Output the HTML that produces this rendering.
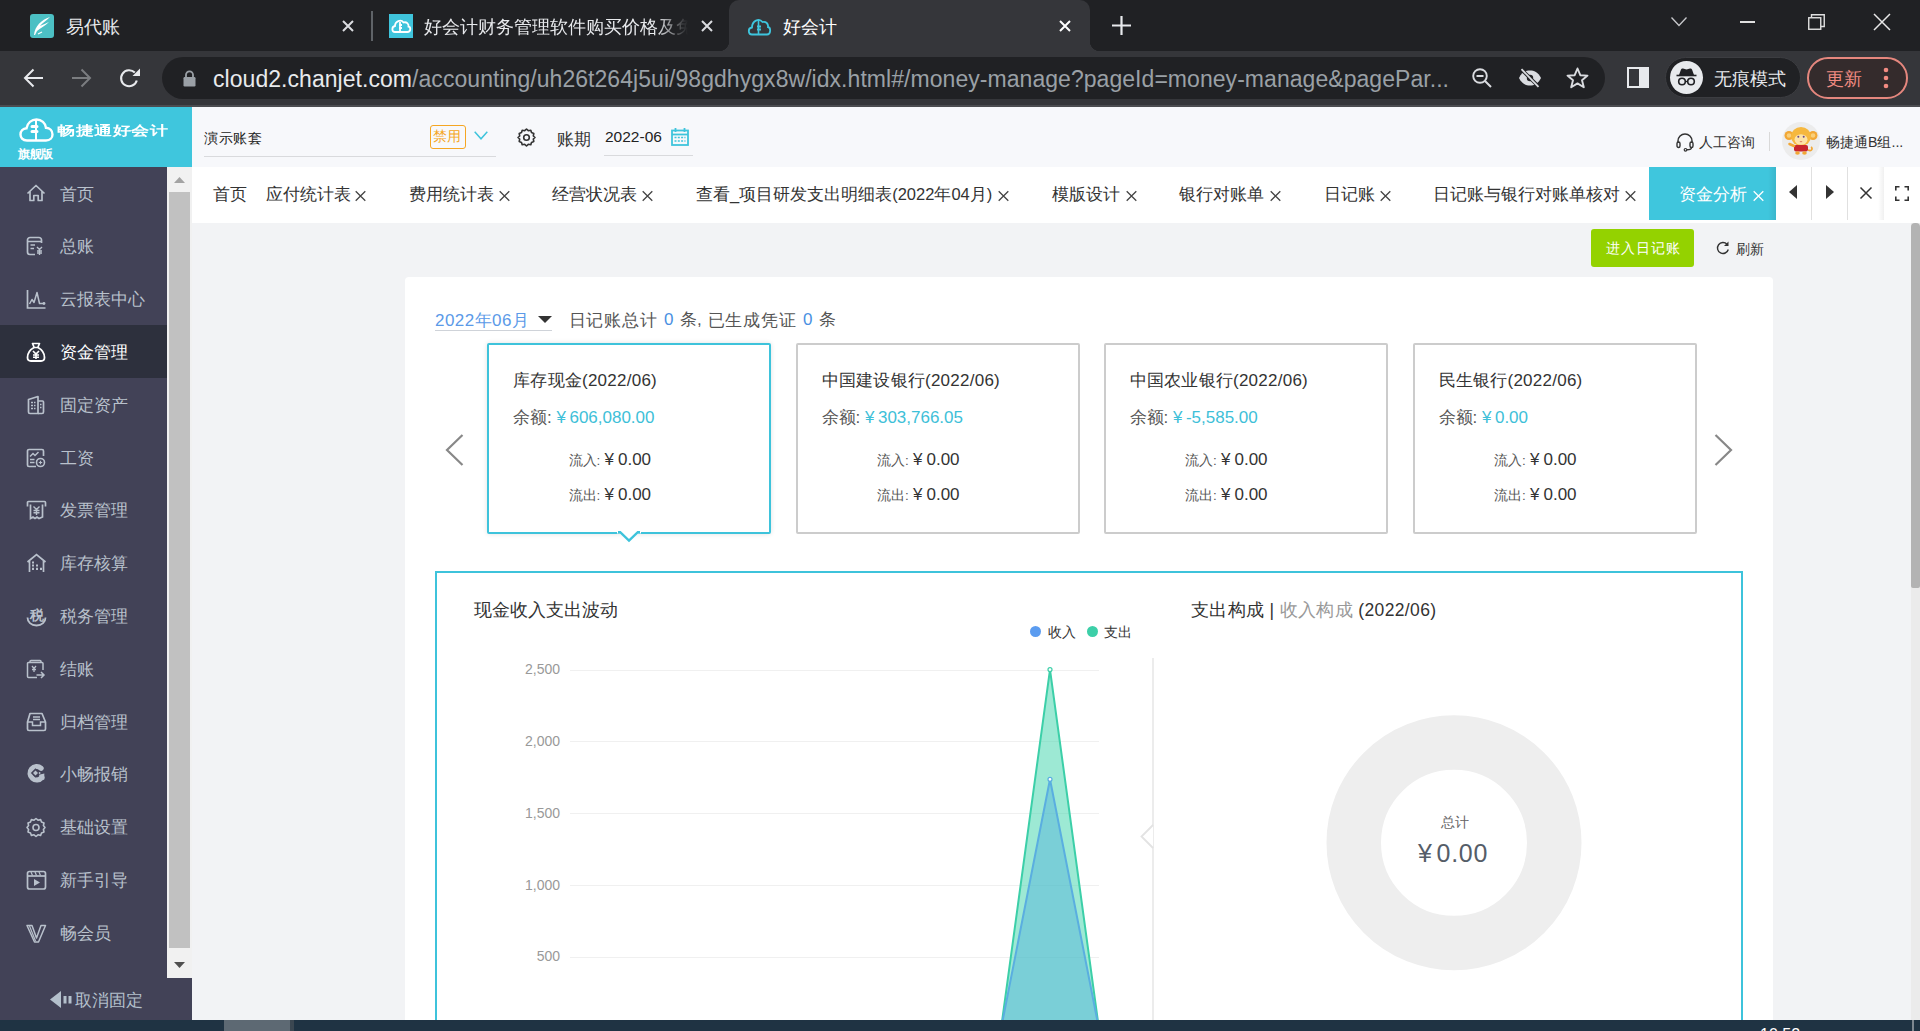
<!DOCTYPE html>
<html><head><meta charset="utf-8">
<style>
*{box-sizing:border-box;margin:0;padding:0}
html,body{width:1920px;height:1031px;overflow:hidden;background:#f2f3f5;font-family:"Liberation Sans",sans-serif;}
.a{position:absolute;white-space:nowrap;line-height:1}
svg{position:absolute;overflow:visible}
/* chrome */
#tabstrip{position:absolute;left:0;top:0;width:1920px;height:51px;background:#202124}
#toolbar{position:absolute;left:0;top:51px;width:1920px;height:55px;background:#35363a}
#tbline{position:absolute;left:0;top:105px;width:1920px;height:2px;background:#4b4c50}
#omni{position:absolute;left:162px;top:57px;width:1443px;height:42px;border-radius:21px;background:#202124}
.tabt{color:#e8eaed;font-size:18px}
/* app */
#logo{position:absolute;left:0;top:107px;width:192px;height:60px;background:#3fc6dd}
#side{position:absolute;left:0;top:167px;width:192px;height:853px;background:#424257}
#sbar{position:absolute;left:167px;top:167px;width:25px;height:811px;background:#f1f1f1}
#sthumb{position:absolute;left:169px;top:192px;width:21px;height:756px;background:#c1c1c1}
.mi{position:absolute;left:0;width:167px;height:52.8px}
.mi.on{background:#2d303d}
.mt{position:absolute;left:60px;font-size:16.8px;color:#b9c1cc;line-height:1;top:19.5px}
.mi.on .mt{color:#fff}
#hdr{position:absolute;left:192px;top:107px;width:1728px;height:60px;background:#f7f8fb}
#tabs{position:absolute;left:192px;top:167px;width:1728px;height:56px;background:#fff}
.tb{position:absolute;top:186px;font-size:16.5px;color:#333;line-height:1}
.tx{position:absolute;top:189px;font-size:15px;color:#444;line-height:1}
#content{position:absolute;left:192px;top:223px;width:1728px;height:797px;background:#f2f3f5}
#taskbar{position:absolute;left:0;top:1020px;width:1920px;height:11px;background:#1f3343}
</style></head><body>

<!-- ============ CHROME TAB STRIP ============ -->
<div id="tabstrip"></div>
<!-- tab1 -->
<div style="position:absolute;left:30px;top:14px;width:24px;height:24px;border-radius:3px;background:#4cc0c4"></div>
<svg style="left:30px;top:14px" width="24" height="24" viewBox="0 0 24 24"><path d="M4 21 C5 12 11 6 20 3 C16 7 12 9 10 12 C14 10 17 9 19 8 C15 12 10 14 7 17 L5 21Z" fill="#fff"/><path d="M8 20 L12 18" stroke="#fff" stroke-width="1.2"/></svg>
<div class="a tabt" style="left:66px;top:18px">易代账</div>
<svg style="left:342px;top:20px" width="12" height="12" viewBox="0 0 12 12"><path d="M1 1L11 11M11 1L1 11" stroke="#dadce0" stroke-width="2"/></svg>
<div style="position:absolute;left:371px;top:11px;width:2px;height:30px;background:#5f6368"></div>
<!-- tab2 -->
<div style="position:absolute;left:389px;top:14px;width:24px;height:24px;background:#3fc4dc"></div>
<svg style="left:389px;top:14px" width="24" height="24" viewBox="0 0 24 24"><path d="M6 18 C2.5 18 2.5 12.5 6 12 C6 7 12 5 14.5 8.5 C17.5 7.5 20 10 19.5 12.5 C22 13 22 18 18.5 18 Z" fill="none" stroke="#fff" stroke-width="1.8"/><path d="M11 8 V18 M10 11h3 M10 14h3" stroke="#fff" stroke-width="1.8"/></svg>
<div class="a tabt" style="left:424px;top:18px;width:264px;overflow:hidden;-webkit-mask-image:linear-gradient(90deg,#000 88%,transparent)">好会计财务管理软件购买价格及免费试用</div>
<svg style="left:701px;top:20px" width="12" height="12" viewBox="0 0 12 12"><path d="M1 1L11 11M11 1L1 11" stroke="#dadce0" stroke-width="2"/></svg>
<!-- active tab -->
<div style="position:absolute;left:729px;top:0px;width:361px;height:52px;background:#35363a;border-radius:10px 10px 0 0"></div>
<div style="position:absolute;left:719px;top:41px;width:10px;height:10px;background:radial-gradient(circle at 0 0,#202124 10px,#35363a 10.5px)"></div>
<div style="position:absolute;left:1090px;top:41px;width:10px;height:10px;background:radial-gradient(circle at 100% 0,#202124 10px,#35363a 10.5px)"></div>
<svg style="left:747px;top:17px" width="24" height="19" viewBox="0 0 24 19"><path d="M5 17.5 C1 17.5 0.5 11 5 10.5 C5 4 12 0.5 15.5 5 C19 4 21.5 7 21 10 C24 10.5 24 17.5 20 17.5 Z" fill="none" stroke="#3ec5dd" stroke-width="1.8"/><path d="M11.5 2.5 V17.5" stroke="#3ec5dd" stroke-width="1.6"/><path d="M10 9.5h4 M10 12.5h4" stroke="#3ec5dd" stroke-width="2"/></svg>
<div class="a tabt" style="left:783px;top:18px;color:#fff">好会计</div>
<svg style="left:1059px;top:20px" width="12" height="12" viewBox="0 0 12 12"><path d="M1 1L11 11M11 1L1 11" stroke="#fff" stroke-width="2"/></svg>
<svg style="left:1112px;top:16px" width="19" height="19" viewBox="0 0 19 19"><path d="M9.5 0V19M0 9.5H19" stroke="#e8eaed" stroke-width="2.2"/></svg>
<!-- window controls -->
<svg style="left:1671px;top:17px" width="16" height="10" viewBox="0 0 16 10"><path d="M0.5 0.5L8 8.5L15.5 0.5" fill="none" stroke="#c8c9cc" stroke-width="1.3"/></svg>
<div style="position:absolute;left:1740px;top:21px;width:15px;height:1.5px;background:#e0e0e0"></div>
<svg style="left:1808px;top:14px" width="17" height="16" viewBox="0 0 17 16"><rect x="0.75" y="3.75" width="12" height="11.5" fill="none" stroke="#e0e0e0" stroke-width="1.4"/><path d="M3.5 3.5V0.75H16.25V12.5H13" fill="none" stroke="#e0e0e0" stroke-width="1.4"/></svg>
<svg style="left:1870px;top:14px" width="24" height="16" viewBox="0 0 24 16"><path d="M4 0L20 16M20 0L4 16" stroke="#e8e8e8" stroke-width="1.5"/></svg>
<div id="toolbar"></div>
<svg style="left:23px;top:68px" width="21" height="20" viewBox="0 0 21 20"><path d="M20 10H2.5M10.5 1.5L2 10L10.5 18.5" fill="none" stroke="#e8eaed" stroke-width="2"/></svg>
<svg style="left:71px;top:68px" width="21" height="20" viewBox="0 0 21 20"><path d="M1 10H18.5M10.5 1.5L19 10L10.5 18.5" fill="none" stroke="#7b7d80" stroke-width="2"/></svg>
<svg style="left:119px;top:68px" width="22" height="21" viewBox="0 0 22 21"><path d="M17.8 12.5 A8 8 0 1 1 15.8 4.6" fill="none" stroke="#e8eaed" stroke-width="2.1"/><path d="M21 0.5V8H13.5Z" fill="#e8eaed"/></svg>
<div id="omni"></div>
<svg style="left:183px;top:70px" width="13" height="17" viewBox="0 0 13 17"><path d="M3 7V4.8A3.5 3.5 0 0 1 10 4.8V7" fill="none" stroke="#9aa0a6" stroke-width="1.8"/><rect x="0.5" y="7" width="12" height="9.5" rx="1.2" fill="#9aa0a6"/></svg>
<div class="a" style="left:213px;top:68px;font-size:23px;letter-spacing:0.05px;color:#9aa0a6"><span style="color:#e8eaed">cloud2.chanjet.com</span>/accounting/uh26t264j5ui/98gdhygx8w/idx.html#/money-manage?pageId=money-manage&amp;pagePar...</div>
<svg style="left:1472px;top:68px" width="20" height="20" viewBox="0 0 20 20"><circle cx="8" cy="8" r="6.8" fill="none" stroke="#dadce0" stroke-width="1.9"/><path d="M4.5 8H11.5M13 13L19 19" stroke="#dadce0" stroke-width="2"/></svg>
<svg style="left:1518px;top:68px" width="24" height="20" viewBox="0 0 24 20"><path d="M1 10C4 4 8 2.5 12 2.5S20 4 23 10C20 16 16 17.5 12 17.5S4 16 1 10Z" fill="#dadce0"/><circle cx="12" cy="10" r="3.2" fill="#202124"/><path d="M3 1L21 19" stroke="#202124" stroke-width="3.5"/><path d="M3.5 1.2L20.5 18.8" stroke="#dadce0" stroke-width="1.8"/></svg>
<svg style="left:1566px;top:67px" width="23" height="22" viewBox="0 0 23 22"><path d="M11.5 1.5L14.3 8.2L21.5 8.6L16 13.2L17.8 20.3L11.5 16.4L5.2 20.3L7 13.2L1.5 8.6L8.7 8.2Z" fill="none" stroke="#dadce0" stroke-width="1.9" stroke-linejoin="round"/></svg>
<svg style="left:1627px;top:67px" width="22" height="21" viewBox="0 0 22 21"><rect x="1" y="1" width="20" height="19" fill="none" stroke="#e8eaed" stroke-width="2"/><rect x="12" y="1" width="9" height="19" fill="#e8eaed"/></svg>
<div style="position:absolute;left:1665px;top:57px;width:136px;height:41px;border-radius:20.5px;background:#202124;border:1px solid #3c3d41"></div>
<div style="position:absolute;left:1670px;top:61px;width:33px;height:33px;border-radius:50%;background:#e8eaed"></div>
<svg style="left:1670px;top:61px" width="33" height="33" viewBox="0 0 33 33"><path d="M9 14H24L22 8.5C21.6 7.6 20.8 7.3 20 7.6L16.5 8.6L13 7.6C12.2 7.3 11.4 7.6 11 8.5Z" fill="#202124"/><path d="M6.5 14.5H26.5" stroke="#202124" stroke-width="1.6"/><circle cx="12" cy="20.5" r="3.3" fill="none" stroke="#202124" stroke-width="1.6"/><circle cx="21" cy="20.5" r="3.3" fill="none" stroke="#202124" stroke-width="1.6"/><path d="M15.3 20.5H17.7" stroke="#202124" stroke-width="1.4"/></svg>
<div class="a" style="left:1714px;top:70px;font-size:18px;color:#e8eaed">无痕模式</div>
<div style="position:absolute;left:1807px;top:57px;width:101px;height:42px;border-radius:21px;border:2px solid #e5877e;background:#342b2c"></div>
<div class="a" style="left:1826px;top:70px;font-size:18px;color:#f28b82">更新</div>
<svg style="left:1883px;top:67px" width="6" height="22" viewBox="0 0 6 22"><circle cx="3" cy="3" r="2.3" fill="#f28b82"/><circle cx="3" cy="11" r="2.3" fill="#f28b82"/><circle cx="3" cy="19" r="2.3" fill="#f28b82"/></svg>
<div id="tbline"></div>

<!-- ============ APP ============ -->
<div id="logo"></div>
<svg style="left:19px;top:118px" width="35" height="24" viewBox="0 0 35 24"><path d="M8 22.5C3.5 22.5 1.5 19.5 1.5 16.5C1.5 13 4 10.5 7.5 10.3C8.5 5 12.5 1.5 17.5 1.5C22.5 1.5 26.5 5 27 9.8C31 10 33.5 13 33.5 16.5C33.5 19.8 31 22.5 27 22.5Z" fill="none" stroke="#fff" stroke-width="2.4"/><path d="M17 1.5V22.5" stroke="#fff" stroke-width="2"/><path d="M13 8.5H18M13 13.5H18" stroke="#fff" stroke-width="3" stroke-linecap="round"/></svg>
<div class="a" style="left:57px;top:122px;font-size:18.5px;font-weight:bold;color:#fff;transform:scaleY(0.72);transform-origin:0 50%;letter-spacing:-0.4px">畅捷通好会计</div>
<div class="a" style="left:18px;top:148.5px;font-size:11.5px;font-weight:bold;color:#fff;letter-spacing:-0.3px">旗舰版</div>
<div id="side"></div>
<div id="sbar"></div><div id="sthumb"></div>
<svg style="left:174px;top:177px" width="11" height="6" viewBox="0 0 11 6"><path d="M0 6L5.5 0L11 6Z" fill="#a3a3a3"/></svg>
<svg style="left:174px;top:962px" width="11" height="6" viewBox="0 0 11 6"><path d="M0 0L5.5 6L11 0Z" fill="#505050"/></svg>
<div class="mi" style="top:167.0px"><svg style="left:26px;top:16.5px" width="21" height="21" viewBox="0 0 21 21"><path d="M1.5 9.5L10 1.5L18.5 9.5M4 7.5V16.5H7.8V11.5H12.2V16.5H16V7.5" fill="none" stroke="#b9c1cc" stroke-width="1.7" stroke-linejoin="round"/></svg><div class="mt">首页</div></div>
<div class="mi" style="top:219.8px"><svg style="left:26px;top:16.5px" width="21" height="21" viewBox="0 0 21 21"><path d="M15.5 7V4A2.5 2.5 0 0 0 13 1.5H4A2.5 2.5 0 0 0 1.5 4V16A2.5 2.5 0 0 0 4 18.5H9" fill="none" stroke="#b9c1cc" stroke-width="1.7"/><path d="M1.5 5.5H15.5M4.5 9H9M4.5 12.5H8" stroke="#b9c1cc" stroke-width="1.5"/><path d="M11 11L13.5 13.5L16 11M13.5 13.5V19M11 15H16M11 17H16" fill="none" stroke="#b9c1cc" stroke-width="1.4"/></svg><div class="mt">总账</div></div>
<div class="mi" style="top:272.6px"><svg style="left:26px;top:16.5px" width="21" height="21" viewBox="0 0 21 21"><path d="M1.5 1V19H19.5" fill="none" stroke="#b9c1cc" stroke-width="1.7"/><path d="M3.5 15L6 10.5L8 13.5L11 3.5L13.5 14.5L18 14.5" fill="none" stroke="#b9c1cc" stroke-width="1.5" stroke-linejoin="round"/><circle cx="18" cy="14.5" r="1.4" fill="#b9c1cc"/></svg><div class="mt">云报表中心</div></div>
<div class="mi on" style="top:325.4px"><svg style="left:26px;top:16.5px" width="21" height="21" viewBox="0 0 21 21"><path d="M6.5 1.5H13.5L11.8 5.5H8.2Z" fill="none" stroke="#fff" stroke-width="1.7" stroke-linejoin="round"/><path d="M8 5.5C3.5 8 1.5 12 1.5 15.5C1.5 18 3 19 5 19H15C17 19 18.5 18 18.5 15.5C18.5 12 16.5 8 12 5.5" fill="none" stroke="#fff" stroke-width="1.8"/><path d="M7 9L10 12L13 9M10 12V17M7 13H13M7 15.3H13" fill="none" stroke="#fff" stroke-width="1.6"/></svg><div class="mt">资金管理</div></div>
<div class="mi" style="top:378.2px"><svg style="left:26px;top:16.5px" width="21" height="21" viewBox="0 0 21 21"><path d="M2.5 4.5L12 1.5V18.5H4A1.5 1.5 0 0 1 2.5 17Z" fill="none" stroke="#b9c1cc" stroke-width="1.7" stroke-linejoin="round"/><path d="M12 6H16.5A1 1 0 0 1 17.5 7V17A1.5 1.5 0 0 1 16 18.5H12" fill="none" stroke="#b9c1cc" stroke-width="1.7"/><path d="M5 7.5H9.5M5 10.5H9.5M5 13.5H9.5M14 9.5H15.5M14 12.5H15.5" stroke="#b9c1cc" stroke-width="1.4" stroke-dasharray="2 1"/></svg><div class="mt">固定资产</div></div>
<div class="mi" style="top:431.0px"><svg style="left:26px;top:16.5px" width="21" height="21" viewBox="0 0 21 21"><path d="M17.5 8V3A1.5 1.5 0 0 0 16 1.5H3A1.5 1.5 0 0 0 1.5 3V17A1.5 1.5 0 0 0 3 18.5H10" fill="none" stroke="#b9c1cc" stroke-width="1.7"/><path d="M4 8.5L7 5.5L9 7.5L12.5 4" fill="none" stroke="#b9c1cc" stroke-width="1.5"/><path d="M4 11.5H8.5M4 14.5H8.5" stroke="#b9c1cc" stroke-width="1.5"/><circle cx="14.5" cy="14.5" r="4" fill="none" stroke="#b9c1cc" stroke-width="1.6"/><path d="M12.8 14.5H16.2M14.5 12.8V16.2" stroke="#b9c1cc" stroke-width="1.2"/></svg><div class="mt">工资</div></div>
<div class="mi" style="top:483.8px"><svg style="left:26px;top:16.5px" width="21" height="21" viewBox="0 0 21 21"><path d="M1.5 6.5V2.5A1 1 0 0 1 2.5 1.5H18.5A1 1 0 0 1 19.5 2.5V6.5" fill="none" stroke="#b9c1cc" stroke-width="1.7"/><path d="M4.5 4.5V18.5L7 17L9 18.5L11 17L13 18.5L16.5 17V4.5" fill="none" stroke="#b9c1cc" stroke-width="1.7"/><path d="M7.5 6.5L10.5 9.5L13.5 6.5M10.5 9.5V15M7.5 10.5H13.5M7.5 12.8H13.5" fill="none" stroke="#b9c1cc" stroke-width="1.4"/></svg><div class="mt">发票管理</div></div>
<div class="mi" style="top:536.6px"><svg style="left:26px;top:16.5px" width="21" height="21" viewBox="0 0 21 21"><path d="M1.5 9L10.5 1.5L19.5 9M3.5 7.5V19M17.5 7.5V19" fill="none" stroke="#b9c1cc" stroke-width="1.7"/><path d="M6 9.5H8M6 12.5H8M10 12.5H12M6 15.8H8M10 15.8H12M14 15.8H16" stroke="#b9c1cc" stroke-width="2.2"/></svg><div class="mt">库存核算</div></div>
<div class="mi" style="top:589.4px"><svg style="left:26px;top:16.5px" width="21" height="21" viewBox="0 0 21 21"><path d="M1.5 11.5C1.5 16 5 19.5 10.5 19.5S19.5 16 19.5 11.5" fill="none" stroke="#b9c1cc" stroke-width="1.8"/><text x="10.5" y="13.5" font-size="13.5" font-weight="bold" fill="#b9c1cc" text-anchor="middle">税</text></svg><div class="mt">税务管理</div></div>
<div class="mi" style="top:642.2px"><svg style="left:26px;top:16.5px" width="21" height="21" viewBox="0 0 21 21"><path d="M4 3.5V2.5A1 1 0 0 1 5 1.5H14A1 1 0 0 1 15 2.5V3.5M1.5 4.5A1 1 0 0 1 2.5 3.5H16A1 1 0 0 1 17 4.5V11M11 18.5H2.5A1 1 0 0 1 1.5 17.5V4.5" fill="none" stroke="#b9c1cc" stroke-width="1.5"/><path d="M6 7L8 9.5L10 7M8 9.5V13M6 10.5H10" fill="none" stroke="#b9c1cc" stroke-width="1.3"/><path d="M10.5 16H17.5M15 13L18 16L15 19" fill="none" stroke="#b9c1cc" stroke-width="1.5"/></svg><div class="mt">结账</div></div>
<div class="mi" style="top:695.0px"><svg style="left:26px;top:16.5px" width="21" height="21" viewBox="0 0 21 21"><path d="M4 1.5H16L19.5 10V17A1.5 1.5 0 0 1 18 18.5H3A1.5 1.5 0 0 1 1.5 17V10Z" fill="none" stroke="#b9c1cc" stroke-width="1.7" stroke-linejoin="round"/><path d="M1.5 10H6.5V13.5H14.5V10H19.5M7 5H14M7 7.5H14" fill="none" stroke="#b9c1cc" stroke-width="1.5"/></svg><div class="mt">归档管理</div></div>
<div class="mi" style="top:747.8px"><svg style="left:26px;top:16.5px" width="21" height="21" viewBox="0 0 21 21"><path d="M15 4.2A6.6 6.6 0 1 0 15.8 13.5" fill="none" stroke="#b9c1cc" stroke-width="5.4" stroke-linecap="round"/><path d="M13 10.8L18.3 9.6V15.6L14.5 16.5Z" fill="#b9c1cc"/><path d="M4.8 9L9.5 4.3L14.2 9L9.5 13.7Z" fill="#424257"/><path d="M7 9L9.5 6.5L12 9L9.5 11.5Z" fill="#b9c1cc"/><circle cx="13.6" cy="9" r="0.9" fill="#b9c1cc"/></svg><div class="mt">小畅报销</div></div>
<div class="mi" style="top:800.6px"><svg style="left:26px;top:16.5px" width="21" height="21" viewBox="0 0 21 21"><path d="M10 1.5L12 3.2L14.6 2.6L15.5 5.1L18 6L17.4 8.6L19 10.5L17.4 12.4L18 15L15.5 15.9L14.6 18.4L12 17.8L10 19.5L8 17.8L5.4 18.4L4.5 15.9L2 15L2.6 12.4L1 10.5L2.6 8.6L2 6L4.5 5.1L5.4 2.6L8 3.2Z" fill="none" stroke="#b9c1cc" stroke-width="1.6" stroke-linejoin="round"/><circle cx="10" cy="10.5" r="3" fill="none" stroke="#b9c1cc" stroke-width="1.6"/></svg><div class="mt">基础设置</div></div>
<div class="mi" style="top:853.4px"><svg style="left:26px;top:16.5px" width="21" height="21" viewBox="0 0 21 21"><rect x="1.5" y="1.5" width="18" height="17.5" rx="2" fill="none" stroke="#b9c1cc" stroke-width="1.7"/><path d="M1.5 6H19.5" stroke="#b9c1cc" stroke-width="1.7"/><path d="M5 2L6.5 5.5M9 2L10.5 5.5M13 2L14.5 5.5" stroke="#b9c1cc" stroke-width="1.2"/><path d="M8 9V16L14 12.5Z" fill="#b9c1cc"/></svg><div class="mt">新手引导</div></div>
<div class="mi" style="top:906.2px"><svg style="left:26px;top:16.5px" width="21" height="21" viewBox="0 0 21 21"><path d="M1 2.5H6L10.5 15L15 2.5H19.5L12.5 19H8.5Z" fill="none" stroke="#b9c1cc" stroke-width="1.5" stroke-linejoin="round"/><path d="M3.5 3L9.5 18" stroke="#b9c1cc" stroke-width="1.2"/></svg><div class="mt">畅会员</div></div>
<svg style="left:50px;top:991px" width="23" height="17" viewBox="0 0 23 17"><path d="M11 0V17L0 8.5Z" fill="#b4c0cc"/><rect x="13.5" y="5" width="3" height="7.5" fill="#b4c0cc"/><rect x="18.5" y="5" width="3" height="7.5" fill="#b4c0cc"/></svg>
<div class="a" style="left:75px;top:992px;font-size:17px;color:#b4c0cc">取消固定</div>
<div id="hdr"></div>
<div class="a" style="left:204px;top:131px;font-size:14px;letter-spacing:0.6px;color:#222">演示账套</div>
<div style="position:absolute;left:204px;top:156px;width:292px;height:1px;background:#d9dadd"></div>
<div style="position:absolute;left:430px;top:125px;width:36px;height:24px;border:1px solid #f5a623;border-radius:3px"></div>
<div class="a" style="left:433px;top:129px;font-size:14px;color:#f5a623">禁用</div>
<svg style="left:474px;top:131px" width="14" height="9" viewBox="0 0 14 9"><path d="M0.7 0.7L7 7.8L13.3 0.7" fill="none" stroke="#3fc4dc" stroke-width="1.5"/></svg>
<svg style="left:517px;top:128px" width="19" height="19" viewBox="0 0 19 19"><path d="M9.5 1L11.3 2.7L13.8 2.3L14.5 4.6L16.8 5.5L16.3 8L18 9.5L16.3 11L16.8 13.5L14.5 14.4L13.8 16.7L11.3 16.3L9.5 18L7.7 16.3L5.2 16.7L4.5 14.4L2.2 13.5L2.7 11L1 9.5L2.7 8L2.2 5.5L4.5 4.6L5.2 2.3L7.7 2.7Z" fill="none" stroke="#333" stroke-width="1.6" stroke-linejoin="round"/><circle cx="9.5" cy="9.5" r="2.8" fill="none" stroke="#333" stroke-width="1.6"/></svg>
<div class="a" style="left:557px;top:130.5px;font-size:16.5px;color:#333">账期</div>
<div class="a" style="left:605px;top:129px;font-size:15.5px;color:#222">2022-06</div>
<svg style="left:671px;top:128px" width="18" height="18" viewBox="0 0 18 18"><rect x="1" y="2.5" width="16" height="14.5" fill="none" stroke="#3fc4dc" stroke-width="1.8"/><path d="M1 6.5H17" stroke="#3fc4dc" stroke-width="1.8"/><path d="M4.5 0V4M13.5 0V4" stroke="#3fc4dc" stroke-width="1.8"/><path d="M3.5 9.5H14.5M3.5 13H14.5" stroke="#3fc4dc" stroke-width="1.3" stroke-dasharray="2 1.3"/></svg>
<div style="position:absolute;left:604px;top:155px;width:89px;height:1px;background:#d9dadd"></div>
<svg style="left:1676px;top:133px" width="18" height="18" viewBox="0 0 18 18"><path d="M2 10V8A7 7 0 0 1 16 8V10" fill="none" stroke="#333" stroke-width="1.5"/><rect x="1" y="9" width="3" height="5.5" rx="1.5" fill="none" stroke="#333" stroke-width="1.4"/><rect x="14" y="9" width="3" height="5.5" rx="1.5" fill="none" stroke="#333" stroke-width="1.4"/><path d="M15.5 14.5C15.5 16 14 16.8 11 16.8" fill="none" stroke="#333" stroke-width="1.4"/><circle cx="9.5" cy="16.8" r="1.3" fill="none" stroke="#333" stroke-width="1.2"/></svg>
<div class="a" style="left:1699px;top:135px;font-size:14.2px;color:#333">人工咨询</div>
<div style="position:absolute;left:1769px;top:132px;width:1px;height:19px;background:#d9d9d9"></div>
<div style="position:absolute;left:1782px;top:122px;width:38px;height:38px;border-radius:50%;background:#ececec"></div>
<svg style="left:1782px;top:122px" width="38" height="38" viewBox="0 0 38 38"><circle cx="7" cy="13.5" r="4.5" fill="#f2a735"/><circle cx="31" cy="13.5" r="4.5" fill="#f2a735"/><circle cx="7" cy="13.5" r="2.3" fill="#f9cf7a"/><circle cx="31" cy="13.5" r="2.3" fill="#f9cf7a"/><ellipse cx="19" cy="14.5" rx="10" ry="9.5" fill="#f6b83f"/><ellipse cx="19" cy="17.5" rx="6.5" ry="5.2" fill="#fde3a8"/><circle cx="16.3" cy="14.8" r="1" fill="#6a4a8a"/><circle cx="21.7" cy="14.8" r="1" fill="#6a4a8a"/><path d="M17.5 19.5Q19 21 20.5 19.5" fill="#c0392b"/><rect x="12" y="23" width="14" height="6.5" rx="2" fill="#c9262c"/><path d="M12 24L7.5 22" stroke="#f2a735" stroke-width="2.5" stroke-linecap="round"/><ellipse cx="15.5" cy="31" rx="2.3" ry="1.8" fill="#f2a735"/><ellipse cx="22.5" cy="31" rx="2.3" ry="1.8" fill="#f2a735"/><path d="M26 28C30 30 31 26 29 25" fill="none" stroke="#f2a735" stroke-width="1.8"/></svg>
<div class="a" style="left:1826px;top:135px;font-size:14.2px;color:#333">畅捷通B组...</div>
<div id="tabs"></div>
<div class="tb" style="left:213px">首页</div>
<div class="tb" style="left:266px">应付统计表</div>
<svg style="left:355px;top:191px" width="11" height="10" viewBox="0 0 11 10"><path d="M0.7 0.3L10.3 9.7M10.3 0.3L0.7 9.7" stroke="#444" stroke-width="1.3"/></svg>
<div class="tb" style="left:409px">费用统计表</div>
<svg style="left:499px;top:191px" width="11" height="10" viewBox="0 0 11 10"><path d="M0.7 0.3L10.3 9.7M10.3 0.3L0.7 9.7" stroke="#444" stroke-width="1.3"/></svg>
<div class="tb" style="left:552px">经营状况表</div>
<svg style="left:642px;top:191px" width="11" height="10" viewBox="0 0 11 10"><path d="M0.7 0.3L10.3 9.7M10.3 0.3L0.7 9.7" stroke="#444" stroke-width="1.3"/></svg>
<div class="tb" style="left:696px">查看_项目研发支出明细表(2022年04月)</div>
<svg style="left:998px;top:191px" width="11" height="10" viewBox="0 0 11 10"><path d="M0.7 0.3L10.3 9.7M10.3 0.3L0.7 9.7" stroke="#444" stroke-width="1.3"/></svg>
<div class="tb" style="left:1052px">模版设计</div>
<svg style="left:1126px;top:191px" width="11" height="10" viewBox="0 0 11 10"><path d="M0.7 0.3L10.3 9.7M10.3 0.3L0.7 9.7" stroke="#444" stroke-width="1.3"/></svg>
<div class="tb" style="left:1179px">银行对账单</div>
<svg style="left:1270px;top:191px" width="11" height="10" viewBox="0 0 11 10"><path d="M0.7 0.3L10.3 9.7M10.3 0.3L0.7 9.7" stroke="#444" stroke-width="1.3"/></svg>
<div class="tb" style="left:1324px">日记账</div>
<svg style="left:1380px;top:191px" width="11" height="10" viewBox="0 0 11 10"><path d="M0.7 0.3L10.3 9.7M10.3 0.3L0.7 9.7" stroke="#444" stroke-width="1.3"/></svg>
<div class="tb" style="left:1432.5px">日记账与银行对账单核对</div>
<svg style="left:1625px;top:191px" width="11" height="10" viewBox="0 0 11 10"><path d="M0.7 0.3L10.3 9.7M10.3 0.3L0.7 9.7" stroke="#444" stroke-width="1.3"/></svg>
<div style="position:absolute;left:1649px;top:167px;width:127px;height:53px;background:#3fc6dd"></div>
<div style="position:absolute;left:1768px;top:167px;width:8px;height:53px;background:linear-gradient(90deg,rgba(0,0,0,0),rgba(0,0,0,0.08))"></div>
<div class="tb" style="left:1679px;color:#fff">资金分析</div>
<svg style="left:1753px;top:191px" width="11" height="10" viewBox="0 0 11 10"><path d="M0.7 0.3L10.3 9.7M10.3 0.3L0.7 9.7" stroke="#fff" stroke-width="1.3"/></svg>
<svg style="left:1789px;top:185px" width="9" height="14" viewBox="0 0 9 14"><path d="M8 0V14L0 7Z" fill="#333"/></svg>
<div style="position:absolute;left:1811px;top:167px;width:1px;height:53px;background:#e0e0e0"></div>
<svg style="left:1825px;top:185px" width="9" height="14" viewBox="0 0 9 14"><path d="M1 0V14L9 7Z" fill="#333"/></svg>
<div style="position:absolute;left:1847px;top:167px;width:1px;height:53px;background:#e0e0e0"></div>
<svg style="left:1860px;top:187px" width="12" height="12" viewBox="0 0 12 12"><path d="M0.5 0.5L11.5 11.5M11.5 0.5L0.5 11.5" stroke="#333" stroke-width="1.5"/></svg>
<div style="position:absolute;left:1878px;top:167px;width:6px;height:53px;background:linear-gradient(90deg,rgba(0,0,0,0),rgba(0,0,0,0.06))"></div>
<svg style="left:1895px;top:186px" width="14" height="15" viewBox="0 0 14 15"><path d="M0.8 4.5V0.8H4.5M9.5 0.8H13.2V4.5M13.2 10.5V14.2H9.5M4.5 14.2H0.8V10.5" fill="none" stroke="#333" stroke-width="1.6"/></svg>
<div id="content"></div>
<div style="position:absolute;left:1911px;top:223px;width:9px;height:797px;background:#ebebeb"></div>
<div style="position:absolute;left:1911px;top:223px;width:9px;height:365px;background:#b3b3b3;border-radius:4px 4px 2px 2px"></div>
<div style="position:absolute;left:1591px;top:229px;width:103px;height:38px;background:#94d200;border-radius:3px"></div>
<div class="a" style="left:1606px;top:241px;font-size:14px;letter-spacing:0.9px;color:#fff">进入日记账</div>
<svg style="left:1716px;top:241px" width="14" height="14" viewBox="0 0 14 14"><path d="M12.3 8.5A5.5 5.5 0 1 1 11 3.2" fill="none" stroke="#333" stroke-width="1.4"/><path d="M12.5 0.5V5H8Z" fill="#333"/></svg>
<div class="a" style="left:1736px;top:242px;font-size:14px;color:#333">刷新</div>
<div style="position:absolute;left:405px;top:277px;width:1368px;height:760px;background:#fff;border-radius:4px"></div>
<!-- PANEL CONTENT -->
<div class="a" style="left:435px;top:312px;font-size:17px;letter-spacing:0.45px;color:#5b9ae8">2022年06月</div>
<div style="position:absolute;left:435px;top:330px;width:117px;height:1px;background:#cfd3d9"></div>
<svg style="left:538px;top:316px" width="14" height="7" viewBox="0 0 14 7"><path d="M0 0H14L7 7Z" fill="#333"/></svg>
<div class="a" style="left:568.5px;top:311.5px;font-size:17px;color:#555;letter-spacing:0.95px">日记账总计</div>
<div class="a" style="left:664px;top:311px;font-size:17px;color:#4a90e2">0</div>
<div class="a" style="left:680px;top:311px;font-size:17px;color:#555">条,</div>
<div class="a" style="left:707.5px;top:311.5px;font-size:17px;color:#555;letter-spacing:0.9px">已生成凭证</div>
<div class="a" style="left:803px;top:311px;font-size:17px;color:#4a90e2">0</div>
<div class="a" style="left:819px;top:311px;font-size:17px;color:#555">条</div>
<svg style="left:445px;top:434px" width="19" height="32" viewBox="0 0 19 32"><path d="M17.5 1L2 16L17.5 31" fill="none" stroke="#888" stroke-width="2.2"/></svg>
<svg style="left:1714px;top:434px" width="19" height="32" viewBox="0 0 19 32"><path d="M1.5 1L17 16L1.5 31" fill="none" stroke="#888" stroke-width="2.2"/></svg>
<div style="position:absolute;left:487px;top:343px;width:284px;height:191px;border:2px solid #3ec3db;border-radius:2px;background:#fff;box-shadow:0 0 5px rgba(0,0,0,0.12)"></div>
<div class="a" style="left:513px;top:371.5px;font-size:17px;letter-spacing:0.25px;color:#333">库存现金(2022/06)</div>
<div class="a" style="left:513px;top:408.5px;font-size:17px;color:#555">余额: <span style="color:#3ec0d8"><span style="margin-right:3.5px">¥</span>606,080.00</span></div>
<div class="a" style="left:568.5px;top:453.5px;font-size:13.5px;color:#555">流入:</div><div class="a" style="left:604.5px;top:451px;font-size:17px;color:#333"><span style="margin-right:4px">¥</span>0.00</div>
<div class="a" style="left:568.5px;top:488.5px;font-size:13.5px;color:#555">流出:</div><div class="a" style="left:604.5px;top:486px;font-size:17px;color:#333"><span style="margin-right:4px">¥</span>0.00</div>
<div style="position:absolute;left:795.5px;top:343px;width:284px;height:191px;border:2px solid #cccccc;border-radius:2px;background:#fff"></div>
<div class="a" style="left:821.5px;top:371.5px;font-size:17px;letter-spacing:0.25px;color:#333">中国建设银行(2022/06)</div>
<div class="a" style="left:821.5px;top:408.5px;font-size:17px;color:#555">余额: <span style="color:#3ec0d8"><span style="margin-right:3.5px">¥</span>303,766.05</span></div>
<div class="a" style="left:877.0px;top:453.5px;font-size:13.5px;color:#555">流入:</div><div class="a" style="left:913.0px;top:451px;font-size:17px;color:#333"><span style="margin-right:4px">¥</span>0.00</div>
<div class="a" style="left:877.0px;top:488.5px;font-size:13.5px;color:#555">流出:</div><div class="a" style="left:913.0px;top:486px;font-size:17px;color:#333"><span style="margin-right:4px">¥</span>0.00</div>
<div style="position:absolute;left:1103.5px;top:343px;width:284px;height:191px;border:2px solid #cccccc;border-radius:2px;background:#fff"></div>
<div class="a" style="left:1129.5px;top:371.5px;font-size:17px;letter-spacing:0.25px;color:#333">中国农业银行(2022/06)</div>
<div class="a" style="left:1129.5px;top:408.5px;font-size:17px;color:#555">余额: <span style="color:#3ec0d8"><span style="margin-right:3.5px">¥</span>-5,585.00</span></div>
<div class="a" style="left:1185.0px;top:453.5px;font-size:13.5px;color:#555">流入:</div><div class="a" style="left:1221.0px;top:451px;font-size:17px;color:#333"><span style="margin-right:4px">¥</span>0.00</div>
<div class="a" style="left:1185.0px;top:488.5px;font-size:13.5px;color:#555">流出:</div><div class="a" style="left:1221.0px;top:486px;font-size:17px;color:#333"><span style="margin-right:4px">¥</span>0.00</div>
<div style="position:absolute;left:1412.5px;top:343px;width:284px;height:191px;border:2px solid #cccccc;border-radius:2px;background:#fff"></div>
<div class="a" style="left:1438.5px;top:371.5px;font-size:17px;letter-spacing:0.25px;color:#333">民生银行(2022/06)</div>
<div class="a" style="left:1438.5px;top:408.5px;font-size:17px;color:#555">余额: <span style="color:#3ec0d8"><span style="margin-right:3.5px">¥</span>0.00</span></div>
<div class="a" style="left:1494.0px;top:453.5px;font-size:13.5px;color:#555">流入:</div><div class="a" style="left:1530.0px;top:451px;font-size:17px;color:#333"><span style="margin-right:4px">¥</span>0.00</div>
<div class="a" style="left:1494.0px;top:488.5px;font-size:13.5px;color:#555">流出:</div><div class="a" style="left:1530.0px;top:486px;font-size:17px;color:#333"><span style="margin-right:4px">¥</span>0.00</div>
<svg style="left:617px;top:530px" width="24" height="13" viewBox="0 0 24 13"><path d="M0 0H24V3.5H21.5L12 12L2.5 3.5H0Z" fill="#fff"/><path d="M1 2.2H3.2L12 10.5L20.8 2.2H23" fill="none" stroke="#3ec3db" stroke-width="2.4"/></svg>
<!-- chart panel -->
<div style="position:absolute;left:435px;top:571px;width:1308px;height:470px;border:2px solid #3ec3db;background:#fff"></div>
<div class="a" style="left:474px;top:602px;font-size:17.5px;color:#333">现金收入支出波动</div>
<div style="position:absolute;left:1030px;top:625.5px;width:11px;height:11px;border-radius:50%;background:#5b9cf0"></div>
<div class="a" style="left:1048px;top:625.5px;font-size:13.5px;color:#333">收入</div>
<div style="position:absolute;left:1087px;top:625.5px;width:11px;height:11px;border-radius:50%;background:#3ccfa8"></div>
<div class="a" style="left:1104px;top:625.5px;font-size:13.5px;color:#333">支出</div>
<div class="a" style="left:460px;width:100px;text-align:right;top:662.1px;font-size:14px;color:#999">2,500</div>
<div style="position:absolute;left:570px;top:670px;width:529px;height:1px;background:#f0f0f0"></div>
<div class="a" style="left:460px;width:100px;text-align:right;top:733.9px;font-size:14px;color:#999">2,000</div>
<div style="position:absolute;left:570px;top:741px;width:529px;height:1px;background:#f0f0f0"></div>
<div class="a" style="left:460px;width:100px;text-align:right;top:805.7px;font-size:14px;color:#999">1,500</div>
<div style="position:absolute;left:570px;top:813px;width:529px;height:1px;background:#f0f0f0"></div>
<div class="a" style="left:460px;width:100px;text-align:right;top:877.5px;font-size:14px;color:#999">1,000</div>
<div style="position:absolute;left:570px;top:885px;width:529px;height:1px;background:#f0f0f0"></div>
<div class="a" style="left:460px;width:100px;text-align:right;top:949.3px;font-size:14px;color:#999">500</div>
<div style="position:absolute;left:570px;top:957px;width:529px;height:1px;background:#f0f0f0"></div>
<svg style="left:0;top:0" width="1920" height="1020" viewBox="0 0 1920 1020">
<path d="M1001 1029L1050 669.6L1099 1029Z" fill="rgba(60,212,170,0.5)"/>
<path d="M1001 1029L1050 779.3L1099 1029Z" fill="rgba(80,175,220,0.45)"/>
<path d="M1001 1029L1050 669.6L1099 1029" fill="none" stroke="#3ccfa8" stroke-width="2"/>
<path d="M1001 1029L1050 779.3L1099 1029" fill="none" stroke="#5aaee0" stroke-width="2"/>
<circle cx="1050" cy="669.6" r="2" fill="#fff" stroke="#3ccfa8" stroke-width="1.2"/>
<circle cx="1050" cy="779.3" r="2" fill="#fff" stroke="#5aaee0" stroke-width="1.2"/>
<path d="M1153 658V1020" stroke="#ececec" stroke-width="2"/>
<path d="M1153 825L1141.5 836.5L1153 848" fill="#fff" stroke="#e3e3e3" stroke-width="1.8"/>
<circle cx="1454" cy="842.8" r="100.25" fill="none" stroke="#eeeeee" stroke-width="54.5"/>
</svg>
<div class="a" style="left:1191px;top:602px;font-size:17.5px;letter-spacing:0.35px;color:#333">支出构成 | <span style="color:#999">收入构成</span> (2022/06)</div>
<div class="a" style="left:1441px;top:815.5px;font-size:13.5px;color:#666">总计</div>
<div class="a" style="left:1418px;top:840.5px;font-size:25px;letter-spacing:0.7px;color:#555d68"><span style="margin-right:4px">¥</span>0.00</div>
<div id="taskbar"></div>
<div style="position:absolute;left:224px;top:1020px;width:66px;height:11px;background:#5d6973"></div>
<div style="position:absolute;left:290px;top:1020px;width:4px;height:11px;background:#3b4751"></div>
<div class="a" style="left:1760px;top:1027px;font-size:16px;color:#fff">10:52</div>
<div style="position:absolute;left:1912px;top:1020px;width:2px;height:11px;background:#7d8790"></div>

</body></html>
